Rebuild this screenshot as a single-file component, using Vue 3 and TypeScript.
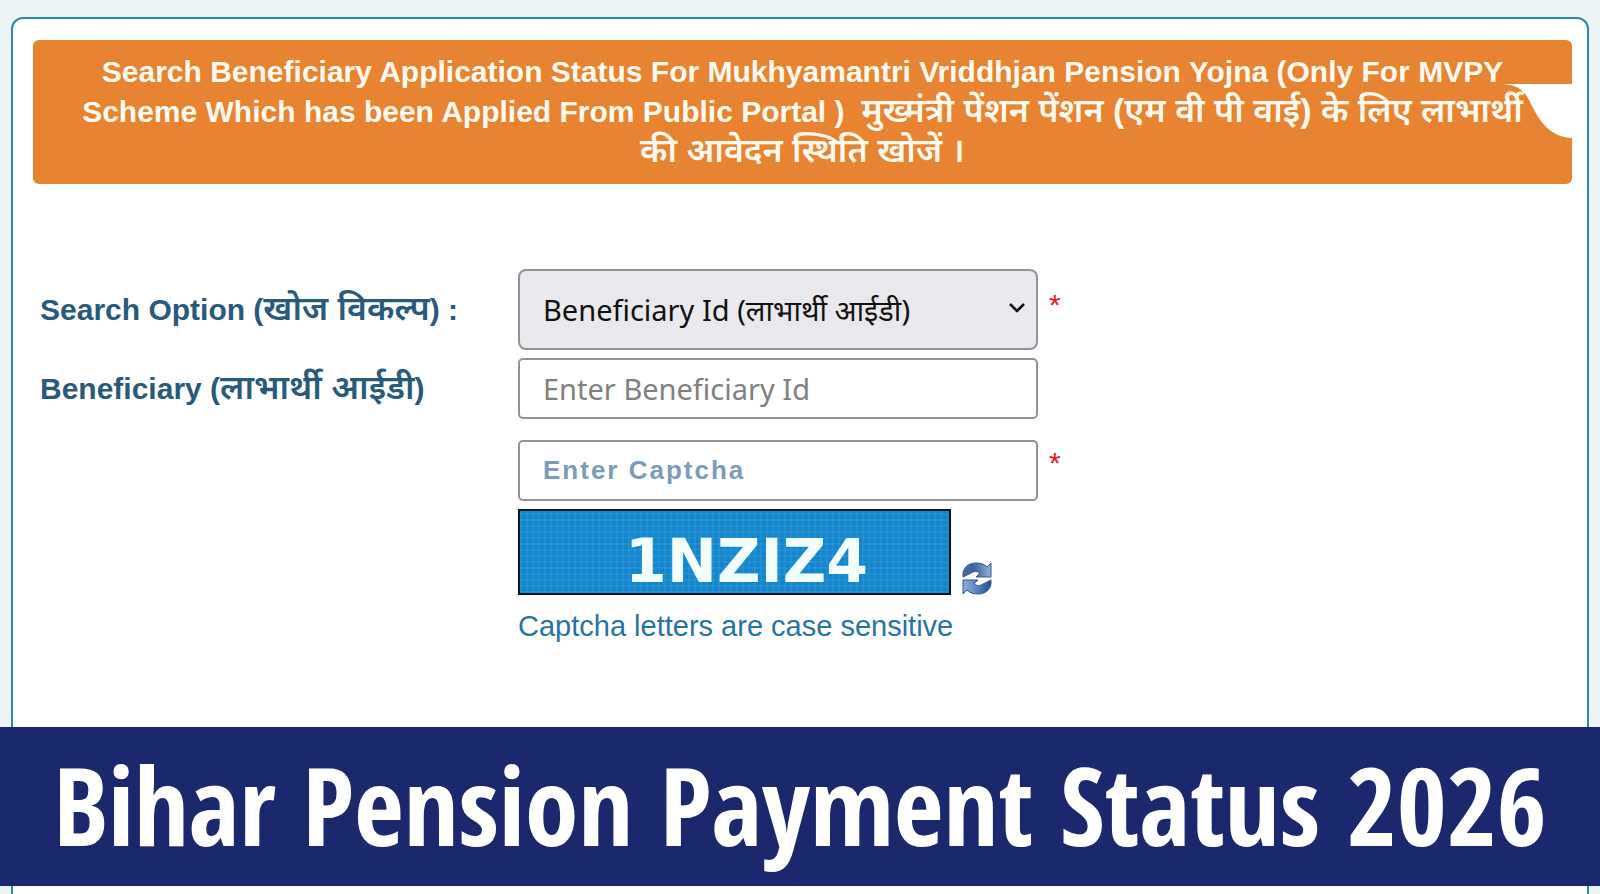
<script setup lang="ts">
import { ref } from 'vue'

const searchOption = ref<string>('beneficiary')
const beneficiaryId = ref<string>('')
const captchaInput = ref<string>('')
const captchaCode = ref<string>('1NZIZ4')

function refreshCaptcha(): void {
  const alphabet = 'ABCDEFGHJKLMNPQRSTUVWXYZ123456789'
  captchaCode.value = Array.from(
    { length: 6 },
    () => alphabet[Math.floor(Math.random() * alphabet.length)],
  ).join('')
}
</script>

<template>
  <div class="page">
    <main class="card">
      <header class="banner">
        <h2 class="banner-title">
          Search Beneficiary Application Status For Mukhyamantri Vriddhjan Pension Yojna (Only For MVPY<br />
          Scheme Which has been Applied From Public Portal )&nbsp;
          <span class="hindi" lang="hi">मुख्मंत्री पेंशन पेंशन (एम वी पी वाई) के लिए लाभार्थी<br />
          की आवेदन स्थिति खोजें ।</span>
        </h2>
        <svg class="banner-notch" viewBox="0 0 70 54" aria-hidden="true">
          <path d="M0 0H70V54C48 53 38 38 29 20C23 7 17 1 0 0Z" fill="#fff" />
        </svg>
      </header>

      <form class="form" @submit.prevent>
        <label class="label" for="search-option">Search Option (<span class="hindi" lang="hi">खोज विकल्प</span>) :</label>
        <div class="select-wrap">
          <select id="search-option" v-model="searchOption" class="control select">
            <option value="beneficiary">Beneficiary Id (लाभार्थी आईडी)</option>
          </select>
          <svg class="chevron" viewBox="0 0 18 12" aria-hidden="true">
            <path d="M2 2L9 9L16 2" fill="none" stroke="#111" stroke-width="2.6" />
          </svg>
        </div>
        <span class="required">*</span>

        <label class="label" for="beneficiary-id">Beneficiary (<span class="hindi" lang="hi">लाभार्थी आईडी</span>)</label>
        <input id="beneficiary-id" v-model="beneficiaryId" class="control" type="text" placeholder="Enter Beneficiary Id" />

        <input
          v-model="captchaInput"
          class="control captcha-input"
          type="text"
          placeholder="Enter Captcha"
          aria-label="Enter Captcha"
        />
        <span class="required">*</span>

        <div class="captcha">
          <div class="captcha-code">{{ captchaCode }}</div>
          <button class="refresh" type="button" aria-label="Refresh captcha" @click="refreshCaptcha">
            <svg viewBox="0 0 30 33" aria-hidden="true">
              <defs>
                <linearGradient id="arrow-top" x1="0" y1="0" x2="1" y2="0">
                  <stop offset="0" stop-color="#4a6ba3" />
                  <stop offset="0.4" stop-color="#3a669f" />
                  <stop offset="1" stop-color="#8fb0dc" />
                </linearGradient>
                <linearGradient id="arrow-bottom" x1="0" y1="0" x2="1" y2="0">
                  <stop offset="0" stop-color="#8fb0dc" />
                  <stop offset="0.55" stop-color="#4f7fbd" />
                  <stop offset="1" stop-color="#24508f" />
                </linearGradient>
              </defs>
              <path
                d="M1 15V11C2 5 7 1 14 1C19 1 22 2 25 5L29 1V15H14L18 11C15 9 12 9 9 11C6 12 4 14 1 15Z"
                fill="url(#arrow-top)" stroke="#34558a" stroke-width="1"
              />
              <path
                d="M29 18V22C28 28 23 32 16 32C11 32 8 31 5 28L1 32V18H16L12 22C15 24 18 24 21 22C24 21 26 19 29 18Z"
                fill="url(#arrow-bottom)" stroke="#34558a" stroke-width="1"
              />
            </svg>
          </button>
        </div>
        <p class="hint">Captcha letters are case sensitive</p>
      </form>
    </main>

    <div class="headline">
      <h1 class="headline-text">Bihar Pension Payment Status 2026</h1>
    </div>
  </div>
</template>

<style>
body {
  margin: 0;
}
</style>

<style scoped>
.page {
  position: relative;
  display: flex;
  box-sizing: border-box;
  min-height: 100vh;
  padding: 17px 11px 0;
  overflow: hidden;
  background: #ecf4f8;
  font-family: "Liberation Sans", Arial, "Noto Sans Devanagari", "Noto Sans", sans-serif;
}

.card {
  flex: 1;
  min-width: 0;
  padding: 21px 15px 0 20px;
  border: 2px solid #2e86b4;
  border-bottom: 0;
  border-radius: 12px 12px 0 0;
  background: #fff;
}

.banner {
  position: relative;
  padding: 12px 32px;
  border-radius: 6px;
  background: #e88431;
}

.banner-title {
  margin: 0;
  color: #fffaf0;
  font-size: 30px;
  font-weight: 700;
  line-height: 40px;
  text-align: center;
  white-space: nowrap;
}

.hindi {
  font-size: 34px;
  font-weight: 600;
  line-height: 1;
}

.banner-notch {
  position: absolute;
  top: 44px;
  right: 0;
  width: 70px;
  height: 54px;
}

.form {
  display: grid;
  grid-template-columns: 478px 520px 1fr;
  align-items: center;
  row-gap: 8px;
  padding: 85px 7px 0;
}

.label {
  color: #285a7c;
  font-size: 30px;
  font-weight: 700;
  line-height: 40px;
}

.select-wrap {
  position: relative;
}

.control {
  grid-column: 2;
  display: block;
  box-sizing: border-box;
  width: 100%;
  height: 61px;
  padding: 0 23px;
  border: 2px solid #939396;
  border-radius: 5px;
  background: #fff;
  color: #111;
  font-family: "Noto Sans", "Noto Sans Devanagari", sans-serif;
  font-size: 29px;
}

.control::placeholder {
  color: #808080;
  opacity: 1;
}

.select {
  height: 81px;
  border-radius: 8px;
  background: #e9e8ed;
  appearance: none;
}

.chevron {
  position: absolute;
  top: 33px;
  right: 12px;
  width: 18px;
  height: 12px;
  pointer-events: none;
}

.required {
  align-self: start;
  padding: 16px 0 0 11px;
  color: #e02020;
  font-size: 30px;
  line-height: 40px;
}

.captcha-input {
  margin-top: 13px;
  font-family: "Liberation Sans", Arial, sans-serif;
  font-size: 26px;
  font-weight: 700;
  letter-spacing: 2px;
}

.captcha-input::placeholder {
  color: #7d9bba;
}

.captcha {
  grid-column: 2;
  display: flex;
  align-items: flex-end;
  gap: 11px;
}

.captcha-code {
  box-sizing: border-box;
  width: 433px;
  height: 86px;
  padding-left: 24px;
  border: 2px solid #06141f;
  background:
    repeating-linear-gradient(0deg, rgba(80, 190, 245, 0.14) 0 2px, transparent 2px 6px),
    repeating-linear-gradient(90deg, rgba(80, 190, 245, 0.14) 0 2px, transparent 2px 6px),
    #1585cb;
  color: #f2fdff;
  font-family: "DejaVu Sans", sans-serif;
  font-size: 60px;
  font-weight: 700;
  line-height: 100px;
  text-align: center;
}

.refresh {
  width: 30px;
  height: 33px;
  padding: 0;
  border: 0;
  background: none;
  cursor: pointer;
}

.refresh svg {
  display: block;
  width: 100%;
  height: 100%;
}

.hint {
  grid-column: 2 / -1;
  margin: 3px 0 0;
  color: #2873a3;
  font-size: 29px;
  line-height: 40px;
}

.headline {
  position: absolute;
  right: 0;
  bottom: 8px;
  left: 0;
  padding: 14px 0 17px;
  background: #1c286e;
}

.headline-text {
  margin: 0;
  color: #fff;
  font-family: "Open Sans Condensed", "Noto Sans Condensed", "Liberation Sans Narrow", "Open Sans", sans-serif;
  font-size: 108px;
  font-weight: 700;
  line-height: 128px;
  text-align: center;
  white-space: nowrap;
}
</style>
